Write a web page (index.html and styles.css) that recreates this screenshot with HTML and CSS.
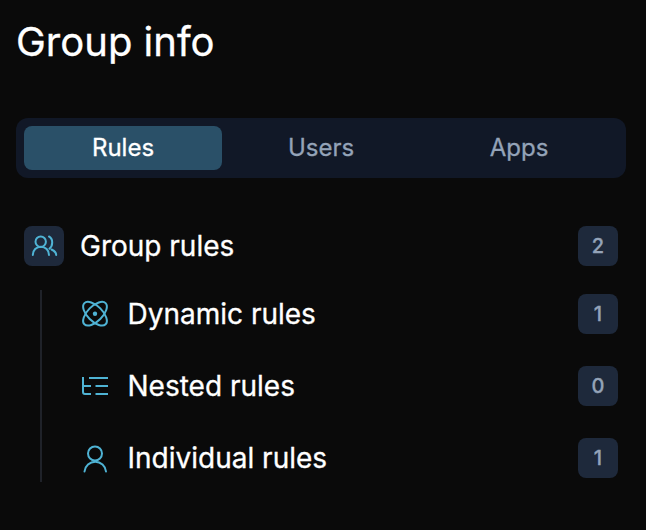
FILE: index.html
```html
<!DOCTYPE html>
<html lang="en">
<head>
<meta charset="utf-8">
<title>Group info</title>
<link rel="stylesheet" href="styles.css">
</head>
<body>
<main class="panel">
  <h1 class="title">Group info</h1>
  <div class="tabs">
    <div class="tab tab-active">Rules</div>
    <div class="tab">Users</div>
    <div class="tab">Apps</div>
  </div>
  <div class="group">
    <div class="row group-row">
      <span class="icon-box">
        <svg class="icon" viewBox="0 0 28 28" fill="none" stroke="currentColor" stroke-width="2" stroke-linecap="round" stroke-linejoin="round">
          <circle cx="10.700" cy="9.700" r="5.200"/>
          <path d="M2.800 23c0-4.800 3.600-8.300 8.100-8.300s8.100 3.500 8.100 8.300"/>
          <path d="M19 4.500c2 1 3.200 3.300 3.200 6 0 2.700-.9 4.700-2.800 6.200"/>
          <path d="M21.500 17.500c2.700 1.300 4.700 3.300 4.700 5.500"/>
        </svg>
      </span>
      <span class="label">Group rules</span>
      <span class="badge">2</span>
    </div>
    <div class="children">
      <div class="row child-row">
        <svg class="icon child-icon" viewBox="0 0 28 28" fill="none" stroke="currentColor" stroke-width="2">
          <ellipse cx="15" cy="13.700" rx="15" ry="7.500" transform="rotate(45 15 13.700)"/>
          <ellipse cx="15" cy="13.700" rx="15" ry="7.500" transform="rotate(-45 15 13.700)"/>
          <circle cx="15" cy="13.700" r="2.200" fill="currentColor" stroke="none"/>
        </svg>
        <span class="label">Dynamic rules</span>
        <span class="badge">1</span>
      </div>
      <div class="row child-row">
        <svg class="icon child-icon" viewBox="0 0 28 28" fill="none" stroke="currentColor" stroke-width="2">
          <path d="M3 5v15a2 2 0 0 0 2 2h6"/>
          <path d="M3 14h8"/>
          <path d="M9 6h19M15.500 14H28M15.500 22H28"/>
        </svg>
        <span class="label">Nested rules</span>
        <span class="badge">0</span>
      </div>
      <div class="row child-row">
        <svg class="icon child-icon" viewBox="0 0 28 28" fill="none" stroke="currentColor" stroke-width="2" stroke-linecap="round">
          <circle cx="15" cy="9.500" r="7"/>
          <path d="M4.500 27.500a10.800 10.800 0 0 1 21.500 0"/>
        </svg>
        <span class="label">Individual rules</span>
        <span class="badge">1</span>
      </div>
    </div>
  </div>
</main>
</body>
</html>
```
FILE: styles.css
```css
* { box-sizing: border-box; }
html, body { margin: 0; height: 100%; }
body {
  background: #0a0a0a;
  color: #fff;
  font-family: Inter, "Liberation Sans", sans-serif;
  -webkit-text-stroke: 0.3px currentColor;
}
.panel { padding: 16px 20px 0 16px; }
.title {
  margin: 0;
  font-size: 40px;
  line-height: 52px;
  font-weight: 400;
}
.tabs {
  margin-top: 50px;
  display: grid;
  grid-template-columns: repeat(3, 1fr);
  padding: 8px;
  background: #111827;
  border-radius: 12px;
}
.tab {
  height: 44px;
  padding-bottom: 2px;
  display: flex;
  align-items: center;
  justify-content: center;
  font-size: 24px;
  font-weight: 400;
  color: #94a3b8;
  border-radius: 8px;
}
.tab-active { background: #2a5068; color: #fff; }
.group { margin-top: 48px; padding: 0 8px; }
.row { display: flex; align-items: center; height: 40px; }
.label { font-size: 28px; font-weight: 400; }
.group-row .label { margin-left: 16px; }
.icon-box {
  width: 40px;
  height: 40px;
  border-radius: 8px;
  background: #1e293b;
  display: flex;
  align-items: center;
  justify-content: center;
}
.icon { width: 28px; height: 28px; flex: none; overflow: visible; color: #4fb3d4; }
.badge {
  margin-left: auto;
  width: 40px;
  height: 40px;
  border-radius: 8px;
  background: #1e293b;
  color: #94a3b8;
  display: flex;
  align-items: center;
  justify-content: center;
  font-size: 20px;
  font-weight: 500;
}
.children {
  margin-top: 24px;
  margin-left: 16px;
  border-left: 2px solid #1f2229;
  padding: 4px 0 4px 38px;
  display: flex;
  flex-direction: column;
  gap: 32px;
}
.child-icon { margin-right: 19.5px; }
```
